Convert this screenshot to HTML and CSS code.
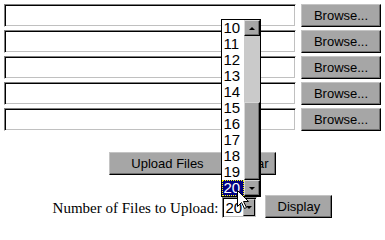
FILE: index.html
```html
<!DOCTYPE html>
<html>
<head>
<meta charset="utf-8">
<link rel="stylesheet" href="styles.css">
</head>
<body>
<form class="upload">
  <div class="files">
    <div class="file-row"><input type="text" class="field"><button type="button" class="btn browse">Browse...</button></div>
    <div class="file-row"><input type="text" class="field"><button type="button" class="btn browse">Browse...</button></div>
    <div class="file-row"><input type="text" class="field"><button type="button" class="btn browse">Browse...</button></div>
    <div class="file-row"><input type="text" class="field"><button type="button" class="btn browse">Browse...</button></div>
    <div class="file-row"><input type="text" class="field"><button type="button" class="btn browse">Browse...</button></div>
  </div>
  <div class="actions">
    <button type="button" class="btn upload-btn">Upload Files</button>
    <button type="button" class="btn clear-btn">Clear</button>
  </div>
  <div class="controls">
    <span class="label">Number of Files to Upload:</span>
    <span class="select-wrap">
      <span class="select">
        <span class="select-value">20</span>
        <span class="arrow-btn"><span class="tri-down"></span></span>
      </span>
      <span class="dropdown">
        <span class="options">
          <span class="option">10</span>
          <span class="option">11</span>
          <span class="option">12</span>
          <span class="option">13</span>
          <span class="option">14</span>
          <span class="option">15</span>
          <span class="option">16</span>
          <span class="option">17</span>
          <span class="option">18</span>
          <span class="option">19</span>
          <span class="option selected">20</span>
        </span>
        <span class="scrollbar">
          <span class="sb-btn"><span class="tri-up"></span></span>
          <span class="sb-track"></span>
          <span class="sb-thumb"></span>
          <span class="sb-btn"><span class="tri-down"></span></span>
        </span>
      </span>
      <svg class="cursor" width="13" height="20" viewBox="0 0 13 20"><polygon points="0.5,0.5 0.5,16.5 4.5,12.5 7.5,18.5 9.5,17.5 6.5,11.5 11.5,11.5" fill="#fff" stroke="#000" stroke-width="1"/></svg>
    </span>
    <button type="button" class="btn display-btn">Display</button>
  </div>
</form>
</body>
</html>
```
FILE: styles.css
```css
html, body {
  margin: 0;
  padding: 0;
  background: #fff;
}

.upload {
  margin: 0;
  width: 385px;
}

.files {
  display: flex;
  flex-direction: column;
  gap: 3px;
  padding: 4px 0 0 4px;
}

.file-row {
  display: flex;
  align-items: flex-start;
  gap: 5px;
}

.field {
  box-sizing: border-box;
  width: 292px;
  height: 23px;
  margin: 0;
  padding: 0;
  background: #fff;
  border: 1px solid;
  border-color: #808080 #fff #fff #808080;
  box-shadow: inset 1px 1px 0 #000, inset -1px -1px 0 #c0c0c0;
  outline: none;
}

.btn {
  box-sizing: border-box;
  height: 23px;
  margin: 0;
  padding: 0;
  font-family: "Liberation Sans", Arial, sans-serif;
  font-size: 13px;
  color: #000;
  background: #a6a6a6;
  border: 1px solid;
  border-color: #c4c4c4 #000 #000 #c4c4c4;
  box-shadow: inset -1px -1px 0 #6e6e6e;
  border-radius: 0;
}

.browse {
  width: 80px;
}

.actions {
  display: flex;
  justify-content: center;
  gap: 4px;
  margin-top: 21px;
}

.upload-btn {
  width: 117px;
}

.clear-btn {
  width: 46px;
}

.controls {
  display: flex;
  align-items: center;
  justify-content: center;
  margin-top: 20px;
}

.label {
  font-family: "Liberation Serif", "Times New Roman", serif;
  font-size: 15px;
  line-height: 17px;
  color: #000;
  margin-right: 4px;
  margin-top: 4px;
}

.select-wrap {
  position: relative;
  display: flex;
  margin-top: 2px;
  margin-right: 8px;
}

.select {
  box-sizing: border-box;
  width: 35px;
  height: 21px;
  display: flex;
  align-items: stretch;
  background: #fff;
  border: 1px solid;
  border-color: #808080 #fff #fff #808080;
  box-shadow: inset 1px 1px 0 #000, inset -1px -1px 0 #c0c0c0;
  padding: 1px;
}

.select-value {
  flex: 1;
  font-family: "Liberation Sans", Arial, sans-serif;
  font-size: 15px;
  line-height: 17px;
  padding-left: 1px;
  color: #000;
}

.arrow-btn {
  box-sizing: border-box;
  width: 12px;
  display: flex;
  align-items: center;
  justify-content: center;
  background: #a6a6a6;
  border: 1px solid;
  border-color: #c4c4c4 #000 #000 #c4c4c4;
}

.tri-down {
  width: 0;
  height: 0;
  border-left: 3px solid transparent;
  border-right: 3px solid transparent;
  border-top: 3px solid #000;
}

.tri-up {
  width: 0;
  height: 0;
  border-left: 3px solid transparent;
  border-right: 3px solid transparent;
  border-bottom: 3px solid #000;
}

.dropdown {
  position: absolute;
  left: -1px;
  bottom: 100%;
  display: flex;
  width: 40px;
  box-sizing: border-box;
  border: 1px solid #000;
  background: #fff;
}

.options {
  display: flex;
  flex-direction: column;
  width: 22px;
}

.option {
  display: block;
  height: 16px;
  line-height: 16px;
  font-family: "Liberation Sans", Arial, sans-serif;
  font-size: 15px;
  color: #000;
  padding-left: 1px;
}

.option.selected {
  background: #000080;
  color: #fff;
  outline: 1px dotted #ffff00;
  outline-offset: -1px;
}

.scrollbar {
  display: flex;
  flex-direction: column;
  width: 16px;
}

.sb-btn {
  box-sizing: border-box;
  height: 16px;
  display: flex;
  align-items: center;
  justify-content: center;
  background: #a6a6a6;
  border: 1px solid;
  border-color: #d8d8d8 #000 #000 #d8d8d8;
  box-shadow: inset -1px -1px 0 #6e6e6e;
}

.sb-track {
  height: 66px;
  background: #cacaca;
}

.sb-thumb {
  box-sizing: border-box;
  height: 78px;
  background: #a6a6a6;
  border: 1px solid;
  border-color: #d8d8d8 #000 #000 #d8d8d8;
  box-shadow: inset -1px -1px 0 #6e6e6e;
}

.cursor {
  position: absolute;
  left: 15px;
  top: -7px;
}

.display-btn {
  width: 67px;
}
```
